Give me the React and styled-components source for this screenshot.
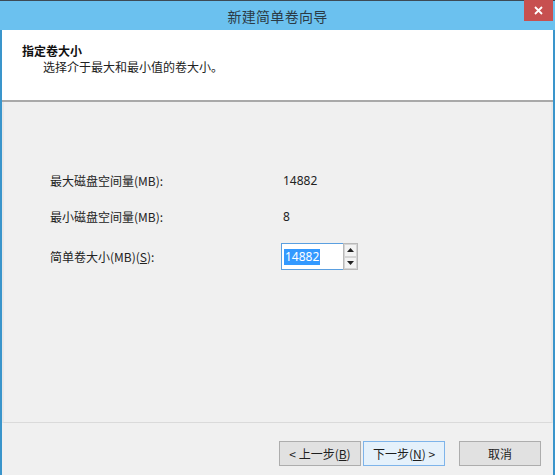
import React from "react";
import styled, { createGlobalStyle } from "styled-components";

const GlobalStyle = createGlobalStyle`
  html, body { margin: 0; padding: 0; background: #ffffff; }
  body {
    font-family: "Noto Sans", "Noto Sans CJK SC", sans-serif;
    font-size: 12px;
    color: #1e1e1e;
  }
  * { box-sizing: border-box; }
`;

const Window = styled.div`
  width: 555px;
  height: 475px;
  display: flex;
  flex-direction: column;
  overflow: hidden;
`;

const TitleBar = styled.div`
  height: 30px;
  flex: none;
  position: relative;
  display: flex;
  align-items: center;
  justify-content: center;
  background: #6bc1ef;
  border-top: 1px solid #3d4a55;
`;

const Title = styled.div`
  font-family: "Noto Sans CJK SC", sans-serif;
  font-size: 14px;
  color: #2b3a45;
  letter-spacing: 0.3px;
`;

const CloseButton = styled.div`
  position: absolute;
  top: -1px;
  right: 2px;
  width: 29px;
  height: 21px;
  background: #c75050;
  display: flex;
  align-items: center;
  justify-content: center;
`;

const Frame = styled.div`
  flex: 1;
  display: flex;
  flex-direction: column;
  border-left: 2px solid #3a95cb;
  border-right: 2px solid #3a95cb;
`;

const Header = styled.div`
  height: 72px;
  flex: none;
  background: #ffffff;
  padding: 13px 0 0 20px;
  display: flex;
  flex-direction: column;
  gap: 0;
  border-bottom: 2px solid #a9a9a9;
`;

const HeaderTitle = styled.div`
  font-family: "Noto Sans CJK SC", sans-serif;
  font-weight: 700;
  font-size: 12px;
  line-height: 16px;
  color: #111;
`;

const HeaderSub = styled.div`
  font-family: "Noto Sans CJK SC", sans-serif;
  font-size: 12px;
  line-height: 16px;
  padding-left: 21px;
  color: #222;
`;

const Body = styled.div`
  flex: 1;
  background: #f0f0f0;
  padding: 69px 0 0 46px;
  border-bottom: 1px solid #dadada;
  border-left: 2px solid #e8e8e8;
  border-right: 2px solid #e8e8e8;
`;

const FieldGrid = styled.div`
  display: grid;
  grid-template-columns: 231px auto;
  grid-template-rows: 20px 20px 27px;
  row-gap: 16px;
  align-items: center;
`;

const Label = styled.div`
  font-family: "Noto Sans CJK SC", sans-serif;
  font-size: 12px;
  line-height: 20px;
  color: #222;
`;

const Value = styled.div`
  font-family: "Noto Sans", sans-serif;
  font-size: 12px;
  line-height: 20px;
  padding-left: 2px;
  color: #222;
`;

const Spin = styled.div`
  display: flex;
  width: 77px;
  height: 27px;
`;

const SpinInput = styled.div`
  width: 62px;
  height: 27px;
  background: #fff;
  border: 1px solid #5a9fe0;
  border-right: none;
  display: flex;
  align-items: center;
  padding-left: 2px;
`;

const Selected = styled.span`
  background: #3399ff;
  color: #fff;
  font-family: "Noto Sans", sans-serif;
  font-size: 12px;
  line-height: 16px;
  padding: 0 1px;
`;

const SpinButtons = styled.div`
  width: 15px;
  height: 27px;
  display: flex;
  flex-direction: column;
  border: 1px solid #b9b9b9;
  background: #fff;
`;

const SpinButton = styled.div`
  flex: 1;
  display: flex;
  align-items: center;
  justify-content: center;
  background: #f3f3f3;
  border: 1px solid #d5d5d5;
  margin: 0;
`;

const Footer = styled.div`
  height: 52px;
  flex: none;
  background: #f0f0f0;
  display: flex;
  justify-content: flex-end;
  align-items: flex-start;
  padding: 18px 12px 0 0;
`;

const Button = styled.div`
  width: 82px;
  height: 25px;
  display: flex;
  align-items: center;
  justify-content: center;
  font-family: "Noto Sans CJK SC", sans-serif;
  font-size: 12px;
  color: #1e1e1e;
  background: ${(p) => (p.$primary ? "#e5f1fb" : "#e1e1e1")};
  border: 1px solid ${(p) => (p.$primary ? "#7eb4ea" : "#adadad")};
  margin-left: ${(p) => p.$gap || 0}px;
  u { text-decoration: underline; }
`;

const Arrow = ({ up }) => (
  <svg width="7" height="4" viewBox="0 0 7 4">
    <path d={up ? "M0 4 L3.5 0 L7 4 Z" : "M0 0 L3.5 4 L7 0 Z"} fill="#222" />
  </svg>
);

export default function App() {
  return (
    <>
      <GlobalStyle />
      <Window>
        <TitleBar>
          <Title>新建简单卷向导</Title>
          <CloseButton>
            <svg width="9" height="9" viewBox="0 0 9 9">
              <path d="M1 1 L8 8 M8 1 L1 8" stroke="#fff" strokeWidth="1.8" />
            </svg>
          </CloseButton>
        </TitleBar>
        <Frame>
          <Header>
            <HeaderTitle>指定卷大小</HeaderTitle>
            <HeaderSub>选择介于最大和最小值的卷大小。</HeaderSub>
          </Header>
          <Body>
            <FieldGrid>
              <Label>最大磁盘空间量(MB):</Label>
              <Value>14882</Value>
              <Label>最小磁盘空间量(MB):</Label>
              <Value>8</Value>
              <Label>
                简单卷大小(MB)(<u>S</u>):
              </Label>
              <Spin>
                <SpinInput>
                  <Selected>14882</Selected>
                </SpinInput>
                <SpinButtons>
                  <SpinButton>
                    <Arrow up />
                  </SpinButton>
                  <SpinButton>
                    <Arrow />
                  </SpinButton>
                </SpinButtons>
              </Spin>
            </FieldGrid>
          </Body>
          <Footer>
            <Button>
              &lt; 上一步(<u>B</u>)
            </Button>
            <Button $primary $gap={2}>
              下一步(<u>N</u>) &gt;
            </Button>
            <Button $gap={14}>取消</Button>
          </Footer>
        </Frame>
      </Window>
    </>
  );
}
